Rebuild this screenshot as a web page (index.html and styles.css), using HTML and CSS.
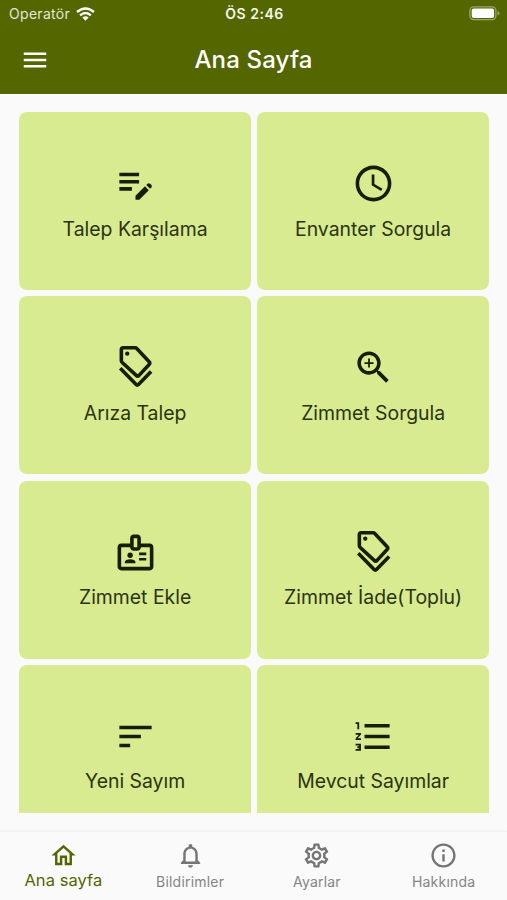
FILE: index.html
```html
<!DOCTYPE html>
<html lang="tr">
<head>
<meta charset="utf-8">
<title>Ana Sayfa</title>
<link rel="stylesheet" href="styles.css">
</head>
<body>
<header class="header">
  <div class="status">
    <div class="carrier"><span>Operatör</span>
      <svg class="wifi" viewBox="0 0 19 14"><g fill="none" stroke="currentColor" stroke-width="2.4"><path d="M1 5Q9.500-2 18 5"/><path d="M4.100 8.300Q9.500 3.700 14.900 8.300"/></g><path fill="currentColor" d="M6.400 10.600Q9.500 8 12.600 10.600L9.500 13.700Z"/></svg>
    </div>
    <div class="time">ÖS 2:46</div>
    <svg class="battery" viewBox="0 0 31 15"><rect x=".9" y=".9" width="26" height="12.700" rx="3.800" fill="none" stroke="#9aa66b" stroke-width="1.300"/><rect x="2.700" y="2.600" width="22.400" height="9.300" rx="2" fill="#fff"/><path d="M28.500 5v4.500q2-.6 2-2.250T28.500 5" fill="#9aa66b"/></svg>
  </div>
  <div class="appbar">
    <svg class="menu" viewBox="0 0 24 24"><path d="M3 18h18v-2H3v2zm0-5h18v-2H3v2zm0-7v2h18V6H3z"/></svg>
    <h1 class="title">Ana Sayfa</h1>
    <span></span>
  </div>
</header>
<main class="grid">
  <a class="card"><svg viewBox="0 0 24 24"><path d="M3 10h11v2H3v-2zm0-2h11V6H3v2zm0 8h7v-2H3v2zm15.010-3.130.71-.71c.39-.39 1.020-.39 1.410 0l.71.71c.39.39.39 1.020 0 1.410l-.71.71-2.120-2.120zm-.71.71-5.300 5.300V21h2.120l5.300-5.300-2.120-2.120z"/></svg><span>Talep Karşılama</span></a>
  <a class="card"><svg viewBox="0 0 24 24"><path d="M11.990 2C6.470 2 2 6.480 2 12s4.470 10 9.990 10C17.520 22 22 17.520 22 12S17.520 2 11.990 2zM12 20c-4.420 0-8-3.580-8-8s3.580-8 8-8 8 3.580 8 8-3.580 8-8 8zm.5-13H11v6l5.250 3.150.75-1.230-4.500-2.670z"/></svg><span>Envanter Sorgula</span></a>
  <a class="card"><svg viewBox="0 0 24 24"><g class="line"><path d="M4.100 2.100Q4.100 1 5.200 1h6.600q.5 0 .9.400l6.900 7.400q.7.800 0 1.500l-5.600 6.100q-.8.800-1.600 0L4.600 9.200q-.5-.5-.5-1z"/><path d="M3.500 12.400l8.700 9q.8.800 1.600 0l6.900-7.100"/></g><circle cx="7.400" cy="4.300" r="1.200"/></svg><span>Arıza Talep</span></a>
  <a class="card"><svg viewBox="0 0 24 24"><path d="M15.500 14h-.79l-.28-.27C15.410 12.590 16 11.110 16 9.500 16 5.910 13.090 3 9.500 3S3 5.910 3 9.500 5.910 16 9.500 16c1.610 0 3.090-.59 4.230-1.570l.27.28v.79l5 4.990L20.490 19l-4.990-5zm-6 0C7.010 14 5 11.990 5 9.500S7.010 5 9.500 5 14 7.010 14 9.500 11.990 14 9.500 14zm2.500-4h-2v2H9v-2H7V9h2V7h1v2h2v1z"/></svg><span>Zimmet Sorgula</span></a>
  <a class="card"><svg viewBox="0 0 24 24"><path d="M20 7h-5V4c0-1.100-.9-2-2-2h-2c-1.100 0-2 .9-2 2v3H4c-1.100 0-2 .9-2 2v11c0 1.100.9 2 2 2h16c1.100 0 2-.9 2-2V9c0-1.100-.9-2-2-2zm-9-3h2v5h-2V4zm9 16H4V9h5c0 1.100.9 2 2 2h2c1.100 0 2-.9 2-2h5v11z"/><circle cx="9" cy="13.500" r="1.500"/><path d="M11.080 16.180C10.440 15.900 9.740 15.750 9 15.750s-1.440.15-2.080.43c-.56.24-.92.78-.92 1.390V18h6v-.43c0-.61-.36-1.150-.92-1.390zM14 12h4v1.500h-4zM14 15h4v1.500h-4z"/></svg><span>Zimmet Ekle</span></a>
  <a class="card"><svg viewBox="0 0 24 24"><g class="line"><path d="M4.100 2.100Q4.100 1 5.200 1h6.600q.5 0 .9.400l6.900 7.400q.7.800 0 1.500l-5.600 6.100q-.8.800-1.600 0L4.600 9.200q-.5-.5-.5-1z"/><path d="M3.500 12.400l8.700 9q.8.800 1.600 0l6.900-7.100"/></g><circle cx="7.400" cy="4.300" r="1.200"/></svg><span>Zimmet İade(Toplu)</span></a>
  <a class="card"><svg viewBox="0 0 24 24"><path d="M3 18h6v-2H3v2zM3 6v2h18V6H3zm0 7h12v-2H3v2z"/></svg><span>Yeni Sayım</span></a>
  <a class="card"><svg viewBox="0 0 24 24"><path d="M2 17h2v.5H3v1h1v.5H2v1h3v-4H2v1zm1-9h1V4H2v1h1v3zm-1 3h1.800L2 13.100v.9h3v-1H3.200L5 10.900V10H2v1zm5-6v2h14V5H7zm0 14h14v-2H7v2zm0-6h14v-2H7v2z"/></svg><span>Mevcut Sayımlar</span></a>
</main>
<nav class="nav">
  <a class="tab active"><svg viewBox="0 0 24 24"><path d="M12 5.690l5 4.500V18h-2v-6H9v6H7v-7.810l5-4.500M12 3L2 12h3v8h6v-6h2v6h6v-8h3L12 3z"/></svg><span>Ana sayfa</span></a>
  <a class="tab"><svg viewBox="0 0 24 24"><path d="M12 22c1.100 0 2-.9 2-2h-4c0 1.100.9 2 2 2zm6-6v-5c0-3.070-1.630-5.640-4.500-6.320V4c0-.83-.67-1.500-1.500-1.500s-1.500.67-1.500 1.500v.68C7.640 5.360 6 7.920 6 11v5l-2 2v1h16v-1l-2-2zm-2 1H8v-6c0-2.480 1.510-4.500 4-4.500s4 2.020 4 4.500v6z"/></svg><span>Bildirimler</span></a>
  <a class="tab"><svg viewBox="0 0 24 24"><path d="M19.430 12.980c.04-.32.07-.64.07-.98 0-.34-.03-.66-.07-.98l2.110-1.650c.19-.15.24-.42.12-.64l-2-3.460c-.09-.16-.26-.25-.44-.25-.06 0-.12.010-.17.030l-2.490 1c-.52-.4-1.080-.73-1.690-.98l-.38-2.650C14.460 2.180 14.250 2 14 2h-4c-.25 0-.46.18-.49.42l-.38 2.650c-.61.25-1.170.59-1.690.98l-2.490-1c-.06-.02-.12-.03-.18-.03-.17 0-.34.09-.43.25l-2 3.460c-.13.22-.07.49.12.64l2.110 1.650c-.04.32-.07.65-.07.98 0 .33.030.66.07.98l-2.110 1.650c-.19.15-.24.42-.12.64l2 3.460c.09.16.26.25.44.25.06 0 .12-.01.17-.03l2.490-1c.52.4 1.080.73 1.690.98l.38 2.650c.03.24.24.42.49.42h4c.25 0 .46-.18.49-.42l.38-2.650c.61-.25 1.170-.59 1.690-.98l2.490 1c.06.02.12.03.18.03.17 0 .34-.09.43-.25l2-3.460c.12-.22.07-.49-.12-.64l-2.110-1.650zm-1.980-1.710c.04.31.05.52.05.73 0 .21-.02.43-.05.73l-.14 1.130.89.7 1.080.84-.7 1.210-1.270-.51-1.040-.42-.9.68c-.43.32-.84.56-1.250.73l-1.060.43-.16 1.130-.2 1.350h-1.400l-.19-1.350-.16-1.130-1.060-.43c-.43-.18-.83-.41-1.230-.71l-.91-.7-1.060.43-1.270.51-.7-1.210 1.080-.84.89-.7-.14-1.130c-.03-.31-.05-.54-.05-.74s.02-.43.05-.73l.14-1.130-.89-.7-1.080-.84.7-1.210 1.270.51 1.040.42.9-.68c.43-.32.84-.56 1.250-.73l1.060-.43.16-1.130.2-1.350h1.390l.19 1.350.16 1.130 1.060.43c.43.18.83.41 1.230.71l.91.7 1.060-.43 1.270-.51.7 1.210-1.070.85-.89.7.14 1.130zM12 8c-2.210 0-4 1.790-4 4s1.790 4 4 4 4-1.790 4-4-1.790-4-4-4zm0 6c-1.100 0-2-.9-2-2s.9-2 2-2 2 .9 2 2-.9 2-2 2z"/></svg><span>Ayarlar</span></a>
  <a class="tab"><svg viewBox="0 0 24 24"><path d="M11 7h2v2h-2zm0 4h2v6h-2zm1-9C6.480 2 2 6.480 2 12s4.480 10 10 10 10-4.480 10-10S17.520 2 12 2zm0 18c-4.410 0-8-3.590-8-8s3.590-8 8-8 8 3.590 8 8-3.590 8-8 8z"/></svg><span>Hakkında</span></a>
</nav>
</body>
</html>
```
FILE: styles.css
```css
* { box-sizing: border-box; }
body {
  margin: 0;
  width: 507px;
  height: 900px;
  display: flex;
  flex-direction: column;
  overflow: hidden;
  background: #fafafa;
  font-family: Inter, "Liberation Sans", sans-serif;
}
svg { display: block; fill: currentColor; flex: none; }
.header { height: 94px; background: #536600; color: #fff; flex: none; }
.status {
  height: 27px;
  padding: 0 7px 0 9px;
  display: grid;
  grid-template-columns: 1fr auto 1fr;
  align-items: center;
  line-height: 27px;
}
.carrier { display: flex; align-items: center; gap: 6px; font-size: 14px; color: #e3e7d3; letter-spacing: .3px; }
.wifi { width: 19px; height: 14px; color: #fff; }
.time { font-size: 14px; font-weight: 600; letter-spacing: .5px; color: #f5f7ea; }
.battery { width: 31px; height: 15px; justify-self: end; }
.appbar {
  height: 66px;
  padding: 0 20px;
  display: grid;
  grid-template-columns: 1fr auto 1fr;
  align-items: center;
}
.menu { width: 30px; height: 30px; }
.title { margin: 0; font-size: 24px; line-height: 30px; font-weight: 500; letter-spacing: .15px; }
.grid {
  height: 719px;
  padding: 18px 18.200px 0 19.400px;
  display: grid;
  grid-template-columns: 1fr 1fr;
  grid-auto-rows: 178px;
  gap: 6.300px 6.700px;
  overflow: hidden;
  flex: none;
}
.card {
  padding-top: 50px;
  display: flex;
  flex-direction: column;
  align-items: center;
  border-radius: 8px;
  background: #d8eb90;
  color: #161e00;
}
.card svg { width: 43px; height: 43px; overflow: visible; }
.card span { margin-top: 11.600px; font-size: 19.400px; line-height: 24px; letter-spacing: 0; white-space: nowrap; color: #2a3410; }
.line { fill: none; stroke: currentColor; stroke-width: 2; }
.nav {
  height: 69px;
  margin-top: auto;
  display: grid;
  grid-template-columns: repeat(4, 1fr);
  border-top: 1px solid #f2f2f2;
  box-shadow: 0 -1px 3px #00000008;
}
.tab {
  padding-top: 9px;
  display: flex;
  flex-direction: column;
  align-items: center;
  color: #757575;
}
.tab svg { width: 29px; height: 29px; }
.tab span { margin-top: 2px; font-size: 14px; line-height: 20px; letter-spacing: .2px; color: #858585; }
.tab.active { color: #536600; }
.tab.active span { margin-top: 0; font-size: 16.500px; letter-spacing: .05px; color: #536600; }
```
